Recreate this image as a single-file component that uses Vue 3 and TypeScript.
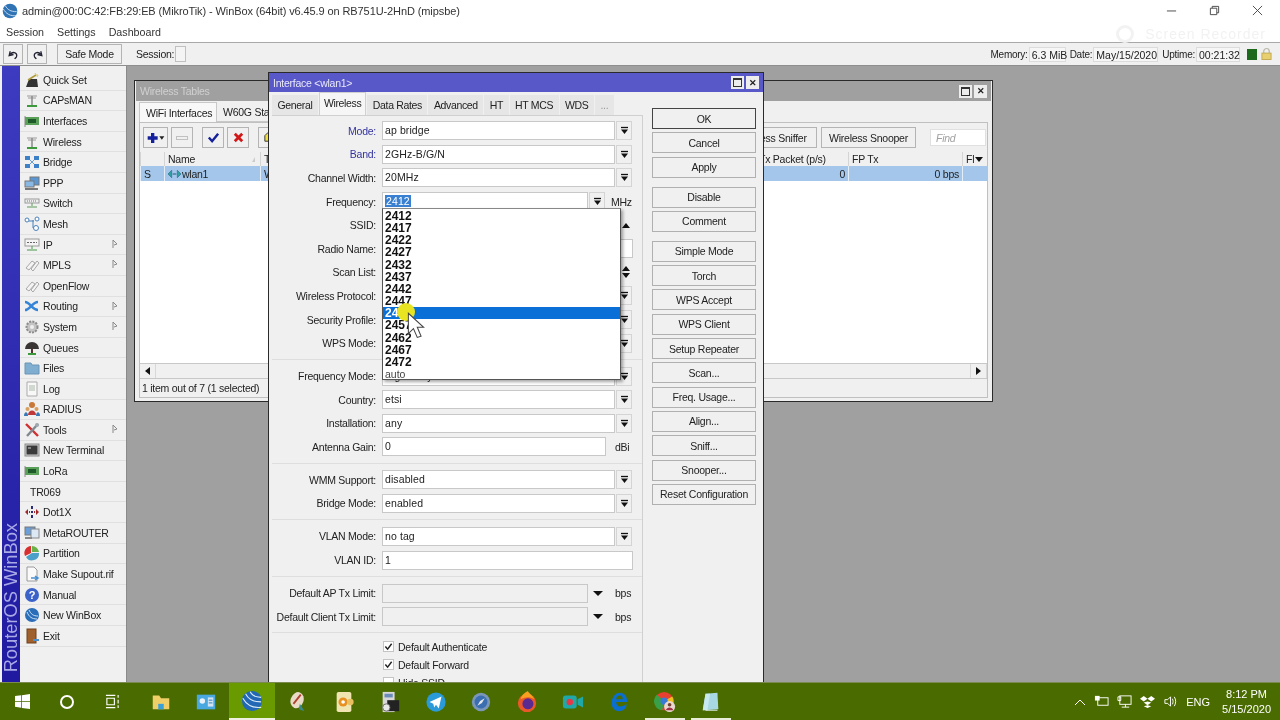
<script setup lang="ts">
interface MenuItem {
  label: string;
  icon: string;
  sub?: boolean;
}

interface FormRow {
  label?: string;
  value?: string;
  kind: "select" | "freq" | "text" | "unit" | "limit" | "check" | "sep" | "up" | "updown";
  accent?: boolean;
  unit?: string;
}

const antenna = '<path d="M3 4h10M4 6h8" stroke="#9a9a9a" fill="none"/><path d="M8 4v9" stroke="#8a8a8a" stroke-width="1.5"/><path d="M3 14h10" stroke="#3c9a3c" stroke-width="2"/>';
const card = '<rect x="1" y="4" width="14" height="8" fill="#5aa05a"/><rect x="4" y="6" width="8" height="4" fill="#1e5a28"/><path d="M1 3v11" stroke="#888"/>';
const tag = '<path d="M2 11l6-7 3 2-6 7zM7 12l6-8 2 2-6 8z" fill="#f4f4f4" stroke="#a8a8a8"/>';
const sphere = '<circle cx="8" cy="8" r="7" fill="#2a6db8"/><path d="M3 5c2 5 5 7 10 7M5 3c2 4 4 6 9 6" stroke="#cfe4f6" fill="none"/>';

const menuItems: MenuItem[] = [
  { label: "Quick Set", icon: '<path d="M2 15l3-8h8l1 8z" fill="#333"/><path d="M4 8l8-5" stroke="#b09a3c" stroke-width="1.5"/><path d="M11 1l1 2 2 0-1 2" stroke="#d8c860" fill="none"/>' },
  { label: "CAPsMAN", icon: antenna },
  { label: "Interfaces", icon: card },
  { label: "Wireless", icon: antenna },
  { label: "Bridge", icon: '<g fill="#3c80c8"><rect x="1" y="2" width="5" height="4"/><rect x="10" y="2" width="5" height="4"/><rect x="1" y="10" width="5" height="4"/><rect x="10" y="10" width="5" height="4"/></g><path d="M6 6l4 4M10 6l-4 4" stroke="#6aa0d8"/>' },
  { label: "PPP", icon: '<rect x="6" y="2" width="9" height="8" fill="#5b96d4" stroke="#777"/><rect x="1" y="6" width="9" height="6" fill="#8ab8e4" stroke="#777"/><path d="M1 14h13" stroke="#777" stroke-width="2"/>' },
  { label: "Switch", icon: '<rect x="1" y="4" width="14" height="4" fill="#eee" stroke="#999"/><path d="M3 6h10" stroke="#777" stroke-dasharray="1 1"/><path d="M8 8v3M3 12h10" stroke="#5a9a5a"/>' },
  { label: "Mesh", icon: '<circle cx="3" cy="4" r="2" fill="#fff" stroke="#4a80b8"/><circle cx="13" cy="3" r="2" fill="#fff" stroke="#4a80b8"/><circle cx="12" cy="12" r="2.5" fill="#fff" stroke="#4a80b8"/><path d="M5 5l5 0M9 4v8" stroke="#4a80b8"/>' },
  { label: "IP", sub: true, icon: '<rect x="1" y="2" width="14" height="7" fill="#f4f4f4" stroke="#999"/><path d="M3 5.5h10" stroke="#666" stroke-dasharray="2 1"/><path d="M8 9v3M3 13h10" stroke="#4a9a4a"/>' },
  { label: "MPLS", sub: true, icon: tag },
  { label: "OpenFlow", icon: tag },
  { label: "Routing", sub: true, icon: '<path d="M1 4c5 0 7 8 13 8M1 12c5 0 7-8 13-8" stroke="#3584d8" stroke-width="2.6" fill="none"/>' },
  { label: "System", sub: true, icon: '<circle cx="8" cy="8" r="5.5" fill="#c4c4c4" stroke="#8c8c8c" stroke-width="2" stroke-dasharray="2 1.2"/><circle cx="8" cy="8" r="2" fill="#f0f0f0"/>' },
  { label: "Queues", icon: '<path d="M1 9a7 7 0 0 1 14 0z" fill="#3a3434"/><path d="M8 9v4" stroke="#5a3030" stroke-width="2"/><path d="M4 14h8" stroke="#3c9a3c" stroke-width="2"/>' },
  { label: "Files", icon: '<path d="M1 14V3h6l1 2h7v9z" fill="#80aed0" stroke="#6a96b8"/>' },
  { label: "Log", icon: '<path d="M3 1h10v14H3z" fill="#f8f8f8" stroke="#aaa"/><path d="M5 5h6M5 7h6M5 9h6" stroke="#a8b8a8"/>' },
  { label: "RADIUS", icon: '<circle cx="8" cy="4" r="3" fill="#c87838"/><circle cx="3.5" cy="8" r="2" fill="#d8a060"/><circle cx="12.5" cy="8" r="2" fill="#d8a060"/><path d="M4 14c0-6 8-6 8 0z" fill="#c03838"/><path d="M0 15c0-5 4-5 4 0zM12 15c0-5 4-5 4 0z" fill="#3878b8"/>' },
  { label: "Tools", sub: true, icon: '<path d="M2 2l12 12" stroke="#d03030" stroke-width="2.4"/><path d="M14 2L3 14" stroke="#808890" stroke-width="2.4"/><circle cx="13" cy="3" r="2" fill="#a0a8b0"/>' },
  { label: "New Terminal", icon: '<rect x="1" y="2" width="14" height="12" fill="#d0d0d0" stroke="#888"/><rect x="2.5" y="3.5" width="11" height="9" fill="#3a3a3a"/><path d="M4 6h3" stroke="#ccc"/>' },
  { label: "LoRa", icon: card },
  { label: "TR069", icon: "" },
  { label: "Dot1X", icon: '<path d="M1 8l3-3v6zM15 8l-3-3v6z" fill="#a02828"/><path d="M8 2v3M8 7v2M8 11v3" stroke="#2a2a7a" stroke-width="2"/><path d="M5 8h1M10 8h1" stroke="#a02828" stroke-width="2"/>' },
  { label: "MetaROUTER", icon: '<rect x="1" y="2" width="10" height="8" fill="#6a9ed8" stroke="#777"/><rect x="7" y="4" width="8" height="9" fill="#dce8f4" stroke="#888"/><path d="M1 13h7" stroke="#888" stroke-width="2"/>' },
  { label: "Partition", icon: '<path d="M7 8V1a7 7 0 0 0-6 10z" fill="#d83030"/><path d="M8 7V1a7 7 0 0 1 7 6z" fill="#68b048"/><path d="M2 12l6-4h7a7 7 0 0 1-13 4z" fill="#4aa0c8"/>' },
  { label: "Make Supout.rif", icon: '<path d="M3 1h7l3 3v11H3z" fill="#fafafa" stroke="#9a9a9a"/><path d="M7 12h6M11 10l3 2-3 2" stroke="#4a90d0" stroke-width="1.5" fill="none"/>' },
  { label: "Manual", icon: '<circle cx="8" cy="8" r="7" fill="#3a62c8"/><text x="8" y="12" text-anchor="middle" font-size="11" font-weight="700" font-family="Liberation Sans" fill="#fff">?</text>' },
  { label: "New WinBox", icon: sphere },
  { label: "Exit", icon: '<rect x="3" y="1" width="9" height="14" fill="#a0602c" stroke="#70401c"/><path d="M9 12h6" stroke="#4a90d0" stroke-width="2"/>' },
];

const formRows: FormRow[] = [
  { label: "Mode", value: "ap bridge", kind: "select", accent: true },
  { label: "Band", value: "2GHz-B/G/N", kind: "select", accent: true },
  { label: "Channel Width", value: "20MHz", kind: "select" },
  { label: "Frequency", value: "2412", kind: "freq", unit: "MHz" },
  { label: "SSID", value: "", kind: "up" },
  { label: "Radio Name", value: "", kind: "text" },
  { label: "Scan List", value: "", kind: "updown" },
  { label: "Wireless Protocol", value: "", kind: "select" },
  { label: "Security Profile", value: "", kind: "select" },
  { label: "WPS Mode", value: "", kind: "select" },
  { kind: "sep" },
  { label: "Frequency Mode", value: "regulatory-domain", kind: "select" },
  { label: "Country", value: "etsi", kind: "select" },
  { label: "Installation", value: "any", kind: "select" },
  { label: "Antenna Gain", value: "0", kind: "unit", unit: "dBi" },
  { kind: "sep" },
  { label: "WMM Support", value: "disabled", kind: "select" },
  { label: "Bridge Mode", value: "enabled", kind: "select" },
  { kind: "sep" },
  { label: "VLAN Mode", value: "no tag", kind: "select" },
  { label: "VLAN ID", value: "1", kind: "text" },
  { kind: "sep" },
  { label: "Default AP Tx Limit", value: "", kind: "limit", unit: "bps" },
  { label: "Default Client Tx Limit", value: "", kind: "limit", unit: "bps" },
  { kind: "sep" },
  { label: "Default Authenticate", kind: "check" },
  { label: "Default Forward", kind: "check" },
  { label: "Hide SSID", kind: "check" },
];

const tabs = ["General", "Wireless", "Data Rates", "Advanced", "HT", "HT MCS", "WDS", "..."];
const frequencies = ["2412", "2417", "2422", "2427", "2432", "2437", "2442", "2447", "2452", "2457", "2462", "2467", "2472"];

const buttonGroups: string[][] = [
  ["OK", "Cancel", "Apply"],
  ["Disable", "Comment"],
  ["Simple Mode", "Torch", "WPS Accept", "WPS Client", "Setup Repeater", "Scan...", "Freq. Usage...", "Align...", "Sniff...", "Snooper...", "Reset Configuration"],
];

const taskIcons: { svg: string; active?: boolean; open?: boolean }[] = [
  { svg: '<path d="M3 5h7l2 3h9v12H3z" fill="#f0cf68"/><path d="M9 14h6v6H9z" fill="#3aa0d8"/>' },
  { svg: '<rect x="2" y="4" width="20" height="16" fill="#4aa8e0"/><rect x="5" y="8" width="6" height="6" rx="3" fill="#e8f0f8"/><path d="M14 7h6v10h-6z" fill="#d0e4f4"/><path d="M15 10h4M15 13h4" stroke="#2a78b8"/>' },
  { active: true, svg: '<circle cx="12" cy="12" r="11" fill="#2268b4"/><path d="M2 9c4 7 10 11 20 10M5 4c3 6 8 9 17 9M10 2c2 4 6 6 12 6" stroke="#dcecf8" stroke-width="1.2" fill="none"/>' },
  { svg: '<ellipse cx="11" cy="10" rx="7" ry="9" fill="#e8dcc8" transform="rotate(20 11 10)"/><path d="M7 14l8-10" stroke="#b04030" stroke-width="2"/><path d="M14 14l5 8-6-2z" fill="#3a8a8a"/>' },
  { svg: '<rect x="4" y="1" width="16" height="22" rx="2" fill="#f0e4b0"/><circle cx="11" cy="12" r="5" fill="#e89020"/><circle cx="11" cy="12" r="2" fill="#fff"/><circle cx="19" cy="12" r="3.5" fill="#e8c060"/>' },
  { svg: '<rect x="4" y="1" width="13" height="22" fill="#d8d8d8"/><rect x="6" y="3" width="9" height="4" fill="#6a8ab8"/><rect x="9" y="10" width="13" height="12" fill="#222"/><circle cx="8" cy="18" r="4" fill="#e8e8e8" stroke="#666"/>' },
  { svg: '<circle cx="12" cy="12" r="10.5" fill="#2a9ad8"/><path d="M5 12l13-6-3 13-3-4-2 3-1-4z" fill="#fff"/>' },
  { svg: '<circle cx="12" cy="12" r="10" fill="#7a96b8"/><circle cx="12" cy="12" r="7" fill="#3a6eb0"/><path d="M8 16l3-5 5-3-3 5z" fill="#e8e8e8"/>' },
  { svg: '<circle cx="12" cy="13" r="10" fill="#e85828"/><circle cx="13" cy="14" r="6" fill="#5a2a90"/><path d="M5 9c1-5 6-8 8-9 1 3 5 4 7 9-4-3-9-3-15 0z" fill="#f8a020"/>' },
  { svg: '<rect x="1" y="5" width="15" height="14" rx="3" fill="#20a8a8"/><circle cx="8.5" cy="12" r="3.5" fill="#e83848"/><path d="M17 9l6-3v12l-6-3z" fill="#20a8a8"/>' },
  { svg: '<path d="M20 17c-2 4-5 5-8 5-5 0-8-4-8-9 0-6 4-11 9-11 5 0 8 4 8 10H9c0 3 2 5 4 5 3 0 5-1 7-3zM9 9h7c0-3-1-4-3-4-2 0-4 1-4 4z" fill="#0a6fd0"/>' },
  { open: true, svg: '<circle cx="11" cy="11" r="10" fill="#e84030"/><path d="M11 11L3 4a10 10 0 0 0 6 17z" fill="#3aa048"/><path d="M11 11l2 10a10 10 0 0 0 7-15z" fill="#f0c020"/><circle cx="11" cy="11" r="4" fill="#3a78d8"/><circle cx="17" cy="17" r="6" fill="#e8d8d0"/><circle cx="17" cy="15" r="2" fill="#704030"/><path d="M13 21c1-4 7-4 8 0z" fill="#a03048"/>' },
  { open: true, svg: '<path d="M6 3l13-1 1 18-17 1z" fill="#a8d8e4"/><path d="M3 21L6 3l5 0-3 18z" fill="#c8e8f0"/><path d="M6 21h13" stroke="#e8f4f8"/>' },
];
</script>

<template>
  <div class="screen">
    <header class="titlebar">
      <svg class="app-icon" viewBox="0 0 24 24" aria-hidden="true">
        <circle cx="12" cy="12" r="11" fill="#2f73b5" />
        <path d="M2 9c4 7 10 11 20 10M5 4c3 6 8 9 17 9" stroke="#d6e6f4" stroke-width="1.3" fill="none" />
      </svg>
      <span class="title-text">admin@00:0C:42:FB:29:EB (MikroTik) - WinBox (64bit) v6.45.9 on RB751U-2HnD (mipsbe)</span>
      <div class="win-controls">
        <svg viewBox="0 0 12 12"><path d="M1 6.5h10" stroke="#444" fill="none" /></svg>
        <svg viewBox="0 0 12 12"><path d="M1.5 3.5h7v7h-7zM3.5 3.5v-2h7v7h-2" stroke="#444" fill="none" /></svg>
        <svg viewBox="0 0 12 12"><path d="M1 1l10 10M11 1L1 11" stroke="#444" fill="none" /></svg>
      </div>
    </header>
    <nav class="menubar">
      <span>Session</span>
      <span>Settings</span>
      <span>Dashboard</span>
    </nav>
    <div class="toolbar">
      <button class="tool-btn small">
        <svg viewBox="0 0 12 12"><path d="M3 3l-1 4 4-1M3 6c2-3 6-2 6 1 0 2-1 2-2 3" stroke="#223" stroke-width="1.2" fill="none" /></svg>
      </button>
      <button class="tool-btn small">
        <svg viewBox="0 0 12 12"><path d="M9 3l1 4-4-1M9 6C7 3 3 4 3 7c0 2 1 2 2 3" stroke="#223" stroke-width="1.2" fill="none" /></svg>
      </button>
      <button class="tool-btn safe">Safe Mode</button>
      <span class="session-label">Session:</span>
      <span class="session-box"></span>
      <div class="status">
        <span class="status-label">Memory:</span><span class="status-box mem">6.3 MiB</span>
        <span class="status-label status-gap">Date:</span><span class="status-box date">May/15/2020</span>
        <span class="status-label status-gap">Uptime:</span><span class="status-box uptime">00:21:32</span>
        <span class="led"></span>
        <svg class="lock" viewBox="0 0 12 14"><path d="M3 6V4a3 3 0 0 1 6 0v2" stroke="#b8b8a8" fill="none" stroke-width="1.3" /><rect x="1" y="6" width="10" height="7" fill="#e8d070" stroke="#c0a850" /></svg>
      </div>
      <span class="watermark-ring"></span>
      <span class="watermark">Screen Recorder</span>
    </div>

    <div class="main">
      <div class="strip"><span>RouterOS WinBox</span></div>
      <aside class="sidebar">
        <div v-for="item in menuItems" :key="item.label" class="side-item">
          <svg v-if="item.icon" class="side-icon" viewBox="0 0 16 16" v-html="item.icon"></svg>
          <span :class="{ 'no-icon': !item.icon }">{{ item.label }}</span>
          <svg v-if="item.sub" class="side-arrow" viewBox="0 0 6 10"><path d="M1 1v8M1 1l4 4-3 1" stroke="#888" fill="none" /></svg>
        </div>
      </aside>

      <div class="desktop">
        <section class="window tables">
          <div class="win-title inactive">
            <span>Wireless Tables</span>
            <div class="win-buttons">
              <span class="win-btn"><i class="box"></i></span>
              <span class="win-btn x">&#x2715;</span>
            </div>
          </div>
          <div class="table-tabs">
            <span class="t-tab on">WiFi Interfaces</span>
            <span class="t-tab">W60G Station</span>
          </div>
          <div class="table-panel">
            <div class="table-tools">
              <button class="tool-btn add">
                <svg viewBox="0 0 24 14"><path d="M6 1h4v4h4v4h-4v4H6V9H2V5h4z" fill="#14209c" /><path d="M16 5h6l-3 4z" fill="#222" /></svg>
              </button>
              <button class="tool-btn sq"><i class="minus"></i></button>
              <button class="tool-btn sq gap">
                <svg viewBox="0 0 14 14"><path d="M2 7l3.5 4L12 3" stroke="#14209c" stroke-width="2.6" fill="none" /></svg>
              </button>
              <button class="tool-btn sq">
                <svg viewBox="0 0 14 14"><path d="M3 3l8 8M11 3l-8 8" stroke="#d01818" stroke-width="3" fill="none" /></svg>
              </button>
              <button class="tool-btn sq gap">
                <svg viewBox="0 0 14 14"><path d="M2 11V5l3-3h7v9z" fill="#f0e040" stroke="#333" /></svg>
              </button>
              <div class="tools-right">
                <button class="tool-btn wide sniffer">Wireless Sniffer</button>
                <button class="tool-btn wide snooper">Wireless Snooper</button>
                <span class="find">Find</span>
              </div>
            </div>
            <div class="grid head">
              <span></span>
              <span class="name-head">Name<i class="sort"></i></span>
              <span>T</span>
              <span>Tx Packet (p/s)</span>
              <span>FP Tx</span>
              <span class="fl">Fl<i class="caret"></i></span>
            </div>
            <div class="grid row">
              <span>S</span>
              <span class="wlan">
                <svg viewBox="0 0 14 10"><path d="M0 5l4-4v8zM14 5l-4-4v8z" fill="#2fa0a0" stroke="#14507a" stroke-width=".5" /><path d="M5 5h4" stroke="#14507a" /></svg>
                wlan1
              </span>
              <span>W</span>
              <span class="num">0</span>
              <span class="num">0 bps</span>
              <span></span>
            </div>
            <div class="table-blank"></div>
            <div class="hscroll">
              <span class="scroll-btn"><i class="arrow-l"></i></span>
              <span class="scroll-track"></span>
              <span class="scroll-btn"><i class="arrow-r"></i></span>
            </div>
            <div class="table-status">1 item out of 7 (1 selected)</div>
          </div>
        </section>

        <section class="window dialog">
          <div class="win-title">
            <span>Interface &lt;wlan1&gt;</span>
            <div class="win-buttons">
              <span class="win-btn"><i class="box"></i></span>
              <span class="win-btn x">&#x2715;</span>
            </div>
          </div>
          <div class="dialog-body">
            <div class="dialog-left">
              <div class="tabs">
                <span v-for="tab in tabs" :key="tab" class="tab" :class="{ on: tab === 'Wireless', more: tab === '...' }">{{ tab }}</span>
              </div>
              <div class="form">
                <template v-for="(row, i) in formRows" :key="i">
                  <div v-if="row.kind === 'sep'" class="sep"></div>
                  <div v-else-if="row.kind === 'check'" class="check-row">
                    <span class="checkbox">
                      <svg v-if="row.label !== 'Hide SSID'" viewBox="0 0 10 10"><path d="M1.5 5l2.5 3 4.5-6" stroke="#222" stroke-width="1.6" fill="none" /></svg>
                    </span>
                    {{ row.label }}
                  </div>
                  <div v-else class="row-line">
                    <label :class="{ accent: row.accent }">{{ row.label }}:</label>
                    <span class="field" :class="'k-' + row.kind">
                      <em v-if="row.kind === 'freq'" class="selected">{{ row.value }}</em>
                      <template v-else>{{ row.value }}</template>
                    </span>
                    <span v-if="row.kind === 'select' || row.kind === 'freq'" class="drop">
                      <svg viewBox="0 0 9 9"><path d="M1 1.5h7" stroke="#111" stroke-width="1.3" /><path d="M1 3.5h7L4.5 8z" fill="#111" /></svg>
                    </span>
                    <span v-if="row.kind === 'limit'" class="plain-arrow"></span>
                    <span v-if="row.kind === 'up' || row.kind === 'updown'" class="spin">
                      <i class="up-tri"></i>
                      <i v-if="row.kind === 'updown'" class="down-tri"></i>
                    </span>
                    <span v-if="row.unit" class="unit-label" :class="'u-' + row.kind">{{ row.unit }}</span>
                  </div>
                </template>
              </div>
            </div>
            <div class="actions">
              <div v-for="(group, g) in buttonGroups" :key="g" class="action-group">
                <button v-for="b in group" :key="b" class="action" :class="{ primary: b === 'OK' }">{{ b }}</button>
              </div>
            </div>
          </div>

          <div class="dropdown">
            <div v-for="f in frequencies" :key="f" class="opt" :class="{ hot: f === '2452' }">{{ f }}</div>
            <div class="opt auto">auto</div>
          </div>
          <span class="cursor-dot"></span>
          <svg class="cursor" viewBox="0 0 14 22"><path d="M1 1v16l4-4 3 7 3-1-3-7h5z" fill="#fff" stroke="#444" stroke-width=".8" /></svg>
        </section>
      </div>
    </div>

    <footer class="taskbar">
      <svg class="win-logo" viewBox="0 0 16 16"><path d="M0 2.2L6.6 1.3v6.2H0zM7.4 1.2L16 0v7.5H7.4zM0 8.3h6.6v6.3L0 13.7zM7.4 8.3H16V16l-8.6-1.2z" fill="#fff" /></svg>
      <span class="cortana"></span>
      <svg class="taskview" viewBox="0 0 16 16"><path d="M1 1.5h10M1 14.5h10M2 4.5h8v7H2zM14 1v3M14 6v4M14 12v3" stroke="#fff" fill="none" stroke-width="1.2" /></svg>
      <span v-for="(t, i) in taskIcons" :key="i" class="task-item" :class="{ active: t.active, open: t.open }">
        <svg viewBox="0 0 24 24" v-html="t.svg"></svg>
      </span>
      <div class="tray">
        <svg class="chev" viewBox="0 0 12 8"><path d="M1 7l5-5 5 5" stroke="#fff" fill="none" /></svg>
        <svg viewBox="0 0 16 16"><rect x="4" y="4" width="11" height="8" fill="none" stroke="#fff" /><rect x="1" y="2" width="5" height="5" fill="#fff" /></svg>
        <svg viewBox="0 0 16 16"><rect x="3" y="2" width="12" height="9" fill="none" stroke="#fff" /><path d="M9 11v3M5 14h8M1 3h3v4H1z" stroke="#fff" fill="none" /></svg>
        <svg viewBox="0 0 16 16"><path d="M4 2l4 3-4 3-4-3zM12 2l4 3-4 3-4-3zM4 9l4-1 4 1-4 3zM4 13l4-1 4 1-4 2z" fill="#fff" /></svg>
        <svg viewBox="0 0 16 16"><path d="M2 6h3l3-3v10l-3-3H2zM10 5c1 2 1 4 0 6M12 3c2 3 2 7 0 10" stroke="#fff" fill="none" /></svg>
        <span class="lang">ENG</span>
        <span class="clock"><b>8:12 PM</b><b>5/15/2020</b></span>
      </div>
    </footer>
  </div>
</template>

<style scoped>
.screen {
  width: 1280px;
  height: 720px;
  display: flex;
  flex-direction: column;
  overflow: hidden;
  background: #f0f0f0;
  color: #222;
  font-family: "Liberation Sans", Arial, sans-serif;
  font-size: 10.5px;
  letter-spacing: -0.25px;
  filter: blur(0.4px);
}
button {
  font: inherit;
  letter-spacing: inherit;
  color: inherit;
  padding: 0;
}

.titlebar {
  height: 21px;
  flex: none;
  background: #fff;
  display: flex;
  align-items: center;
  padding-left: 2px;
  font-size: 11px;
  letter-spacing: -0.1px;
}
.app-icon {
  width: 16px;
  height: 16px;
  margin-right: 4px;
}
.title-text {
  color: #333;
}
.win-controls {
  margin-left: auto;
  display: flex;
  gap: 32px;
  padding-right: 17px;
}
.win-controls svg {
  width: 11px;
  height: 11px;
}

.menubar {
  height: 21px;
  flex: none;
  background: #fff;
  display: flex;
  align-items: center;
  gap: 13px;
  padding-left: 6px;
  font-size: 10.7px;
  letter-spacing: 0;
  color: #333;
  border-bottom: 1px solid #a8a8a8;
}

.toolbar {
  height: 22px;
  flex: none;
  background: #f0f0f0;
  border-bottom: 1px solid #8e8e8e;
  display: flex;
  align-items: center;
  position: relative;
  padding-left: 3px;
}
.tool-btn {
  background: #f0f0f0;
  border: 1px solid #b4b4b4;
  display: inline-flex;
  align-items: center;
  justify-content: center;
  height: 20px;
}
.tool-btn svg {
  display: block;
}
.small {
  width: 20px;
  margin-right: 4px;
}
.small svg {
  width: 13px;
  height: 13px;
}
.safe {
  width: 65px;
  margin-left: 6px;
}
.session-label {
  margin-left: 14px;
  width: 39px;
  white-space: nowrap;
}
.session-box {
  width: 11px;
  height: 16px;
  border: 1px solid #c0c0c0;
  background: #f4f4f4;
  box-sizing: border-box;
}
.status {
  margin-left: auto;
  display: flex;
  align-items: center;
  padding-right: 8px;
}
.status-label {
  font-size: 10px;
  white-space: nowrap;
}
.status-box {
  height: 15px;
  line-height: 15px;
  background: #f6f6f6;
  border: 1px solid #dcdcdc;
  box-sizing: border-box;
  margin-left: 1px;
  padding-left: 2px;
  white-space: nowrap;
  letter-spacing: 0;
}
.mem {
  width: 37px;
}
.date {
  width: 65px;
}
.uptime {
  width: 44px;
}
.status-gap {
  margin-left: 4px;
}
.led {
  width: 10px;
  height: 11px;
  background: #1c6a1c;
  margin-left: 7px;
}
.lock {
  width: 11px;
  height: 14px;
  margin-left: 4px;
}
.watermark {
  position: absolute;
  right: 14px;
  top: -17px;
  font-size: 14px;
  letter-spacing: 1px;
  color: #f2f2f2;
}
.watermark-ring {
  position: absolute;
  left: 1116px;
  top: -18px;
  width: 12px;
  height: 12px;
  border: 3px solid #f2f2f2;
  border-radius: 50%;
}

.main {
  flex: 1;
  display: flex;
  min-height: 0;
  background: #f0f0f0;
}
.strip {
  width: 18px;
  margin-left: 2px;
  flex: none;
  background: linear-gradient(#3d3cc0, #1f1aa0);
  display: flex;
  align-items: flex-end;
  justify-content: center;
  padding-bottom: 10px;
  box-sizing: border-box;
}
.strip span {
  writing-mode: vertical-rl;
  transform: rotate(180deg);
  font-size: 18.3px;
  line-height: 18px;
  letter-spacing: 0;
  color: #a9a9e6;
  white-space: nowrap;
}
.sidebar {
  width: 107px;
  flex: none;
  box-sizing: border-box;
  padding-top: 4px;
  background: #f0f0f0;
  border-right: 1px solid #8a8a8a;
}
.side-item {
  height: 20.6px;
  box-sizing: border-box;
  display: flex;
  align-items: center;
  position: relative;
  padding-left: 4px;
  border-bottom: 1px solid #e0e0e0;
  font-size: 10.5px;
  letter-spacing: -0.2px;
}
.side-icon {
  width: 16px;
  height: 16px;
  margin-right: 3px;
  flex: none;
}
.no-icon {
  margin-left: 6px;
}
.side-arrow {
  width: 6px;
  height: 10px;
  position: absolute;
  right: 8px;
  top: 4px;
}

.desktop {
  flex: 1;
  position: relative;
  background: #a0a0a0;
  overflow: hidden;
}
.window {
  position: absolute;
  background: #f0f0f0;
  border: 1px solid #2a2a2a;
  box-sizing: border-box;
}
.tables {
  left: 7px;
  top: 14px;
  width: 859px;
  height: 322px;
  display: flex;
  flex-direction: column;
  padding: 0 1px 1px;
}
.dialog {
  left: 141px;
  top: 6px;
  width: 496px;
  height: 640px;
}
.win-title {
  height: 19px;
  flex: none;
  background: #5858c8;
  color: #e8e8f8;
  display: flex;
  align-items: center;
  padding-left: 4px;
}
.win-title.inactive {
  background: #a0a0a0;
  color: #d0d0d0;
  height: 20px;
}
.win-buttons {
  margin-left: auto;
  display: flex;
  gap: 2px;
  padding-right: 4px;
}
.win-btn {
  width: 13px;
  height: 13px;
  background: #ededed;
  display: flex;
  align-items: center;
  justify-content: center;
  font-size: 9px;
  font-weight: 700;
  color: #222;
}
.box {
  width: 7px;
  height: 6px;
  border: 1px solid #333;
  border-top-width: 2px;
}

.table-tabs {
  height: 21px;
  flex: none;
  display: flex;
  align-items: flex-end;
  padding-left: 3px;
}
.t-tab {
  height: 20px;
  line-height: 20px;
  padding: 0 6px;
  white-space: nowrap;
  border-bottom: 1px solid #c8c8c8;
  box-sizing: border-box;
}
.t-tab.on {
  background: #f8f8f8;
  border: 1px solid #c8c8c8;
  border-bottom: none;
  width: 78px;
}
.table-panel {
  flex: 1;
  margin: 0 3px 2px;
  border: 1px solid #c0c0c0;
  display: flex;
  flex-direction: column;
  min-height: 0;
}
.table-tools {
  height: 29px;
  flex: none;
  display: flex;
  align-items: center;
  padding-left: 3px;
  gap: 3px;
}
.add {
  width: 25px;
  height: 21px;
}
.add svg {
  width: 20px;
  height: 12px;
}
.sq {
  width: 22px;
  height: 21px;
}
.sq svg {
  width: 13px;
  height: 13px;
}
.gap {
  margin-left: 6px;
}
.minus {
  width: 10px;
  height: 2px;
  border: 1px solid #c0c0c0;
}
.tools-right {
  margin-left: auto;
  display: flex;
  align-items: center;
  gap: 4px;
  padding-right: 1px;
}
.wide {
  height: 21px;
}
.snooper {
  width: 95px;
}
.sniffer {
  width: 90px;
}
.find {
  width: 56px;
  height: 17px;
  line-height: 17px;
  margin-left: 10px;
  background: #fff;
  border: 1px solid #e0e0e0;
  box-sizing: border-box;
  padding-left: 5px;
  color: #a0a0a0;
  font-style: italic;
}
.grid {
  display: grid;
  grid-template-columns: 24px 96px 495px 93px 114px 1fr;
  flex: none;
}
.grid > span {
  box-sizing: border-box;
  padding: 0 3px;
  border-left: 1px solid #d4d4d4;
  white-space: nowrap;
  overflow: hidden;
  display: flex;
  align-items: center;
}
.head {
  height: 14px;
  background: #f0f0f0;
}
.row {
  height: 15px;
  background: #a3c6ea;
}
.row > span {
  border-left-color: #e4eef8;
}
.row .num {
  justify-content: flex-end;
}
.name-head {
  position: relative;
}
.sort {
  position: absolute;
  right: 5px;
  top: 5px;
  border-left: 3px solid transparent;
  border-bottom: 5px solid #ccc;
}
.fl {
  justify-content: space-between;
}
.caret {
  border-left: 4px solid transparent;
  border-right: 4px solid transparent;
  border-top: 5px solid #111;
  margin-right: 1px;
}
.wlan {
  gap: 1px;
}
.wlan svg {
  width: 13px;
  height: 10px;
}
.table-blank {
  flex: 1;
  background: #fff;
}
.hscroll {
  height: 14px;
  flex: none;
  display: flex;
  border-top: 1px solid #c8c8c8;
  border-bottom: 1px solid #c8c8c8;
}
.scroll-btn {
  width: 15px;
  display: flex;
  align-items: center;
  justify-content: center;
  border-right: 1px solid #d8d8d8;
}
.scroll-track {
  flex: 1;
  border-right: 1px solid #d8d8d8;
}
.arrow-l {
  border-top: 4px solid transparent;
  border-bottom: 4px solid transparent;
  border-right: 5px solid #111;
}
.arrow-r {
  border-top: 4px solid transparent;
  border-bottom: 4px solid transparent;
  border-left: 5px solid #111;
}
.table-status {
  height: 18px;
  line-height: 18px;
  flex: none;
  padding-left: 2px;
}

.dialog-body {
  display: flex;
  padding: 0 7px 0 3px;
}
.dialog-left {
  width: 371px;
  flex: none;
}
.tabs {
  height: 23px;
  display: flex;
  align-items: flex-end;
  box-sizing: border-box;
  letter-spacing: -0.35px;
}
.tab {
  height: 20px;
  line-height: 20px;
  padding: 0 5.5px;
  margin-right: 1px;
  background: #e6e6e6;
  white-space: nowrap;
}
.tab.on {
  background: #f6f6f6;
  height: 23px;
  line-height: 20px;
  border: 1px solid #d0d0d0;
  border-bottom: none;
  box-sizing: border-box;
  padding: 0 4px;
}
.tab.more {
  color: #999;
  width: 8px;
}
.form {
  border-top: 1px solid #d0d0d0;
  border-right: 1px solid #d0d0d0;
  padding-top: 3px;
}
.row-line {
  height: 23.6px;
  display: flex;
  align-items: center;
}
.row-line label {
  width: 104px;
  flex: none;
  text-align: right;
  margin-right: 6px;
  white-space: nowrap;
}
.accent {
  color: #33339c;
}
.field {
  height: 19px;
  line-height: 17px;
  box-sizing: border-box;
  background: #fff;
  border: 1px solid #c8c8c8;
  padding-left: 2px;
  width: 233px;
  white-space: nowrap;
  overflow: hidden;
  letter-spacing: 0.1px;
}
.k-freq {
  width: 206px;
}
.k-text {
  width: 251px;
}
.k-unit {
  width: 224px;
}
.k-limit {
  width: 206px;
  background: #f0f0f0;
}
.selected {
  font-style: normal;
  background: #3a80d2;
  color: #fff;
  padding: 0 1px;
}
.drop {
  width: 16px;
  height: 19px;
  margin-left: 1px;
  display: flex;
  align-items: center;
  justify-content: center;
  background: #f0f0f0;
  border: 1px solid #d4d4d4;
  box-sizing: border-box;
}
.drop svg {
  width: 9px;
  height: 9px;
}
.plain-arrow {
  margin-left: 5px;
  border-left: 5px solid transparent;
  border-right: 5px solid transparent;
  border-top: 5px solid #111;
}
.spin {
  margin-left: auto;
  width: 17px;
  margin-right: 8px;
  display: flex;
  flex-direction: column;
  align-items: center;
  gap: 2px;
}
.up-tri {
  border-left: 4px solid transparent;
  border-right: 4px solid transparent;
  border-bottom: 5px solid #111;
}
.down-tri {
  border-left: 4px solid transparent;
  border-right: 4px solid transparent;
  border-top: 5px solid #111;
}
.unit-label {
  margin-left: 6px;
}
.u-unit {
  margin-left: 9px;
}
.u-limit {
  margin-left: 12px;
}
.sep {
  height: 9.4px;
  box-sizing: border-box;
  padding-top: 4px;
}
.sep::after {
  content: "";
  display: block;
  border-top: 1px solid #dedede;
}
.check-row {
  height: 18px;
  display: flex;
  align-items: center;
  padding-left: 111px;
  gap: 4px;
}
.checkbox {
  width: 11px;
  height: 11px;
  background: #fff;
  border: 1px solid #c4c4c4;
  box-sizing: border-box;
  display: flex;
}
.checkbox svg {
  width: 9px;
  height: 9px;
}

.actions {
  width: 104px;
  flex: none;
  margin-left: 9px;
  padding-top: 16px;
  display: flex;
  flex-direction: column;
  gap: 9px;
}
.action-group {
  display: flex;
  flex-direction: column;
  gap: 3.3px;
}
.action {
  height: 21px;
  background: #f0f0f0;
  border: 1px solid #b0b0b0;
}
.action.primary {
  border-color: #444;
}

.dropdown {
  position: absolute;
  left: 113px;
  top: 135px;
  width: 239px;
  height: 172px;
  box-sizing: border-box;
  background: #fff;
  border: 1px solid #555;
  border-top-color: #888;
  box-shadow: 2px 2px 3px rgba(0, 0, 0, 0.35);
  padding-top: 1px;
}
.opt {
  height: 12.17px;
  line-height: 12px;
  padding-left: 2px;
  font-size: 12px;
  font-weight: 700;
  letter-spacing: 0;
  color: #111;
}
.opt.hot {
  background: #0a6fd6;
  color: #fff;
}
.opt.auto {
  font-size: 10.5px;
  font-weight: 400;
  color: #444;
}
.cursor-dot {
  position: absolute;
  left: 128px;
  top: 230px;
  width: 18px;
  height: 18px;
  border-radius: 50%;
  background: #e9e422;
}
.cursor {
  position: absolute;
  left: 138px;
  top: 239px;
  width: 18px;
  height: 28px;
}

.taskbar {
  height: 38px;
  flex: none;
  background: #4a6b00;
  border-top: 1px solid #7a8a50;
  box-sizing: border-box;
  display: flex;
  align-items: center;
  position: relative;
  color: #fff;
  letter-spacing: 0;
}
.win-logo {
  width: 15px;
  height: 15px;
  margin-left: 15px;
  flex: none;
}
.cortana {
  width: 10px;
  height: 10px;
  border: 2px solid #fff;
  border-radius: 50%;
  margin-left: 30px;
  flex: none;
}
.taskview {
  width: 15px;
  height: 15px;
  margin-left: 31px;
  flex: none;
}
.taskview + .task-item {
  margin-left: 17.6px;
}
.task-item {
  width: 45.85px;
  height: 37px;
  flex: none;
  display: flex;
  align-items: center;
  justify-content: center;
  box-sizing: border-box;
  position: relative;
}
.task-item svg {
  width: 22px;
  height: 22px;
}
.task-item.active {
  background: #699a00;
  border-bottom: 2px solid #f0f0e0;
}
.task-item.open::after {
  content: "";
  position: absolute;
  left: 3px;
  right: 3px;
  bottom: 0;
  height: 2px;
  background: #e8ecd8;
}
.tray {
  margin-left: auto;
  display: flex;
  align-items: center;
  height: 100%;
  padding-right: 9px;
}
.tray svg {
  width: 15px;
  height: 15px;
  margin-right: 8px;
}
.tray .chev {
  width: 12px;
  height: 8px;
  margin-right: 8px;
}
.lang {
  font-size: 11px;
}
.clock {
  display: flex;
  flex-direction: column;
  align-items: center;
  font-size: 11px;
  margin-left: 12px;
  gap: 3px;
  line-height: 12px;
}
.clock b {
  font-weight: 400;
}
</style>
